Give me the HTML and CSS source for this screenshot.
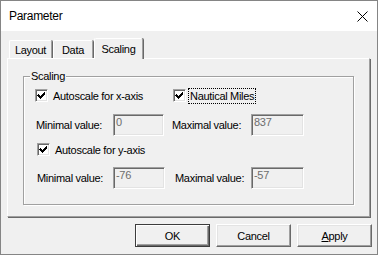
FILE: index.html
```html
<!DOCTYPE html>
<html lang="en">
<head>
  <meta charset="UTF-8">
  <title>Parameter</title>
  <link rel="stylesheet" href="styles.css">
</head>
<body>

<div class="window">
  <div class="titlebar">
    <span class="title">Parameter</span>
    <span class="close-btn">
      <svg width="11" height="11" viewBox="0 0 11 11"><path d="M0.5 0.5L10.5 10.5M10.5 0.5L0.5 10.5" stroke="#000" stroke-width="1"/></svg>
    </span>
  </div>

  <div class="dialog-body">
    <div class="tab-strip">
      <div class="tab tab-layout">Layout</div>
      <div class="tab tab-data">Data</div>
      <div class="tab tab-scaling active">Scaling</div>
    </div>

    <div class="tab-page">
      <fieldset class="group">
        <legend>Scaling</legend>

        <div class="row row-check1">
          <label class="check-item check-x">
            <span class="cb"><svg width="9" height="9" viewBox="2 2 9 9" shape-rendering="crispEdges"><path d="M3 5h1v1h1v1h1v-1h1v-1h1v-1h1v-1h1v3h-1v1h-1v1h-1v1h-1v1h-1v-1h-1v-1h-1v-1h-1z" fill="#000"/></svg></span>
            <span class="cb-text">Autoscale for x-axis</span>
          </label>
          <label class="check-item check-nm">
            <span class="cb"><svg width="9" height="9" viewBox="2 2 9 9" shape-rendering="crispEdges"><path d="M3 5h1v1h1v1h1v-1h1v-1h1v-1h1v-1h1v3h-1v1h-1v1h-1v1h-1v1h-1v-1h-1v-1h-1v-1h-1z" fill="#000"/></svg></span>
            <span class="cb-text focus">Nautical Miles</span>
          </label>
        </div>

        <div class="row row-values1">
          <span class="lbl lbl-min1">Minimal value:</span>
          <span class="field field-min1">0</span>
          <span class="lbl lbl-max1">Maximal value:</span>
          <span class="field field-max">837</span>
        </div>

        <div class="row row-check2">
          <label class="check-item">
            <span class="cb"><svg width="9" height="9" viewBox="2 2 9 9" shape-rendering="crispEdges"><path d="M3 5h1v1h1v1h1v-1h1v-1h1v-1h1v-1h1v3h-1v1h-1v1h-1v1h-1v1h-1v-1h-1v-1h-1v-1h-1z" fill="#000"/></svg></span>
            <span class="cb-text">Autoscale for y-axis</span>
          </label>
        </div>

        <div class="row row-values2">
          <span class="lbl lbl-min2">Minimal value:</span>
          <span class="field field-min2">-76</span>
          <span class="lbl lbl-max2">Maximal value:</span>
          <span class="field field-max">-57</span>
        </div>
      </fieldset>
    </div>

    <div class="button-row">
      <button class="btn btn-default">OK</button>
      <button class="btn">Cancel</button>
      <button class="btn"><u>A</u>pply</button>
    </div>
  </div>
</div>

</body>
</html>
```

FILE: styles.css
```css
body {
  margin: 0;
  font-family: "Liberation Sans", Arial, sans-serif;
  font-size: 11px;
  letter-spacing: -0.3px;
  color: #000000;
  background-color: #f0f0f0;
}
.window {
  width: 378px;
  height: 255px;
  box-sizing: border-box;
  border: 1px solid #858585;
  background-color: #f0f0f0;
}

/* title bar */
.titlebar {
  height: 30px;
  background-color: #ffffff;
  display: flex;
  align-items: center;
  justify-content: space-between;
  padding: 0 9px 0 8px;
}
.title {
  font-size: 12px;
}
.close-btn {
  display: flex;
  width: 11px;
  height: 11px;
}

.dialog-body {
  padding: 7px 5px 0 6px;
}

/* tabs */
.tab-strip {
  display: flex;
  align-items: flex-end;
  height: 20px;
  margin-left: 2px;
}
.tab {
  box-sizing: border-box;
  height: 18px;
  border-top: 1px solid #ffffff;
  border-left: 1px solid #ffffff;
  border-right: 1px solid #a0a0a0;
  box-shadow: 1px 0 0 #696969;
  border-radius: 2px 2px 0 0;
  text-align: center;
  line-height: 16px;
  padding-top: 1px;
}
.tab-layout { width: 43px; margin-right: 1px; }
.tab-data { width: 40px; margin-right: 1px; }
.tab-scaling { width: 49px; }
.tab.active {
  position: relative;
  z-index: 1;
  height: 21px;
  margin-bottom: -1px;
  background-color: #f0f0f0;
  line-height: 16px;
  padding-top: 2px;
}

/* tab page */
.tab-page {
  box-sizing: border-box;
  width: 363px;
  height: 159px;
  border-top: 1px solid #ffffff;
  border-left: 1px solid #ffffff;
  border-right: 1px solid #a0a0a0;
  border-bottom: 1px solid #a0a0a0;
  box-shadow: 1px 1px 0 #696969;
  padding: 11px 0 0 15px;
}

/* group box */
.group {
  box-sizing: border-box;
  width: 331px;
  height: 135px;
  margin: 0;
  padding: 0;
  border: 1px solid #a0a0a0;
  box-shadow: 1px 1px 0 #ffffff, inset 1px 1px 0 #ffffff;
}
.group legend {
  margin-left: 6px;
  padding: 0 1px;
  line-height: 13px;
  background-color: #f0f0f0;
}

.row {
  display: flex;
  align-items: center;
}
.row-check1 {
  height: 17px;
  margin-top: 4px;
  padding-left: 11px;
}
.row-values1 {
  height: 22px;
  margin-top: 10px;
  padding-left: 12px;
}
.row-check2 {
  height: 17px;
  margin-top: 5px;
  padding-left: 13px;
}
.row-values2 {
  height: 22px;
  margin-top: 9px;
  padding-left: 13px;
}

/* checkboxes */
.check-item {
  display: flex;
  align-items: center;
}
.check-x {
  width: 138px;
}
.cb {
  box-sizing: border-box;
  width: 13px;
  height: 13px;
  padding: 1px;
  background-color: #ffffff;
  border: 1px solid;
  border-color: #a0a0a0 #ffffff #ffffff #a0a0a0;
  box-shadow: inset 1px 1px 0 #696969, inset -1px -1px 0 #e3e3e3;
  display: flex;
}
.cb-text {
  margin-left: 5px;
  line-height: 14px;
}
.check-nm .cb-text {
  margin-left: 2px;
}
.focus {
  padding: 0 1px;
  border: 1px dotted #000000;
}

/* labels and edit fields */
.lbl {
  line-height: 14px;
}
.lbl-min1 { width: 77px; }
.lbl-max1 { width: 79px; margin-left: 8px; }
.lbl-min2 { width: 76px; }
.lbl-max2 { width: 76px; margin-left: 10px; }

.field {
  box-sizing: border-box;
  height: 22px;
  padding: 1px 2px 0 2px;
  line-height: 13px;
  color: #6d6d6d;
  background-color: #f0f0f0;
  border: 1px solid;
  border-color: #a0a0a0 #ffffff #ffffff #a0a0a0;
  box-shadow: inset 1px 1px 0 #696969, inset -1px -1px 0 #e3e3e3;
}
.field-min1 { width: 51px; }
.field-min2 { width: 52px; }
.field-max { width: 53px; }

/* buttons */
.button-row {
  display: flex;
  justify-content: flex-end;
  gap: 6px;
  margin-top: 7px;
}
.btn {
  box-sizing: border-box;
  width: 75px;
  height: 23px;
  padding: 0;
  font-family: inherit;
  font-size: 11px;
  letter-spacing: -0.3px;
  color: #000000;
  background-color: #f0f0f0;
  border: 1px solid;
  border-color: #ffffff #696969 #696969 #ffffff;
  box-shadow: inset -1px -1px 0 #a0a0a0, inset 1px 1px 0 #e3e3e3;
}
.btn-default {
  border-color: #3c3c3c;
  box-shadow: inset 1px 1px 0 #ffffff, inset -1px -1px 0 #696969, inset -2px -2px 0 #a0a0a0;
}
```
